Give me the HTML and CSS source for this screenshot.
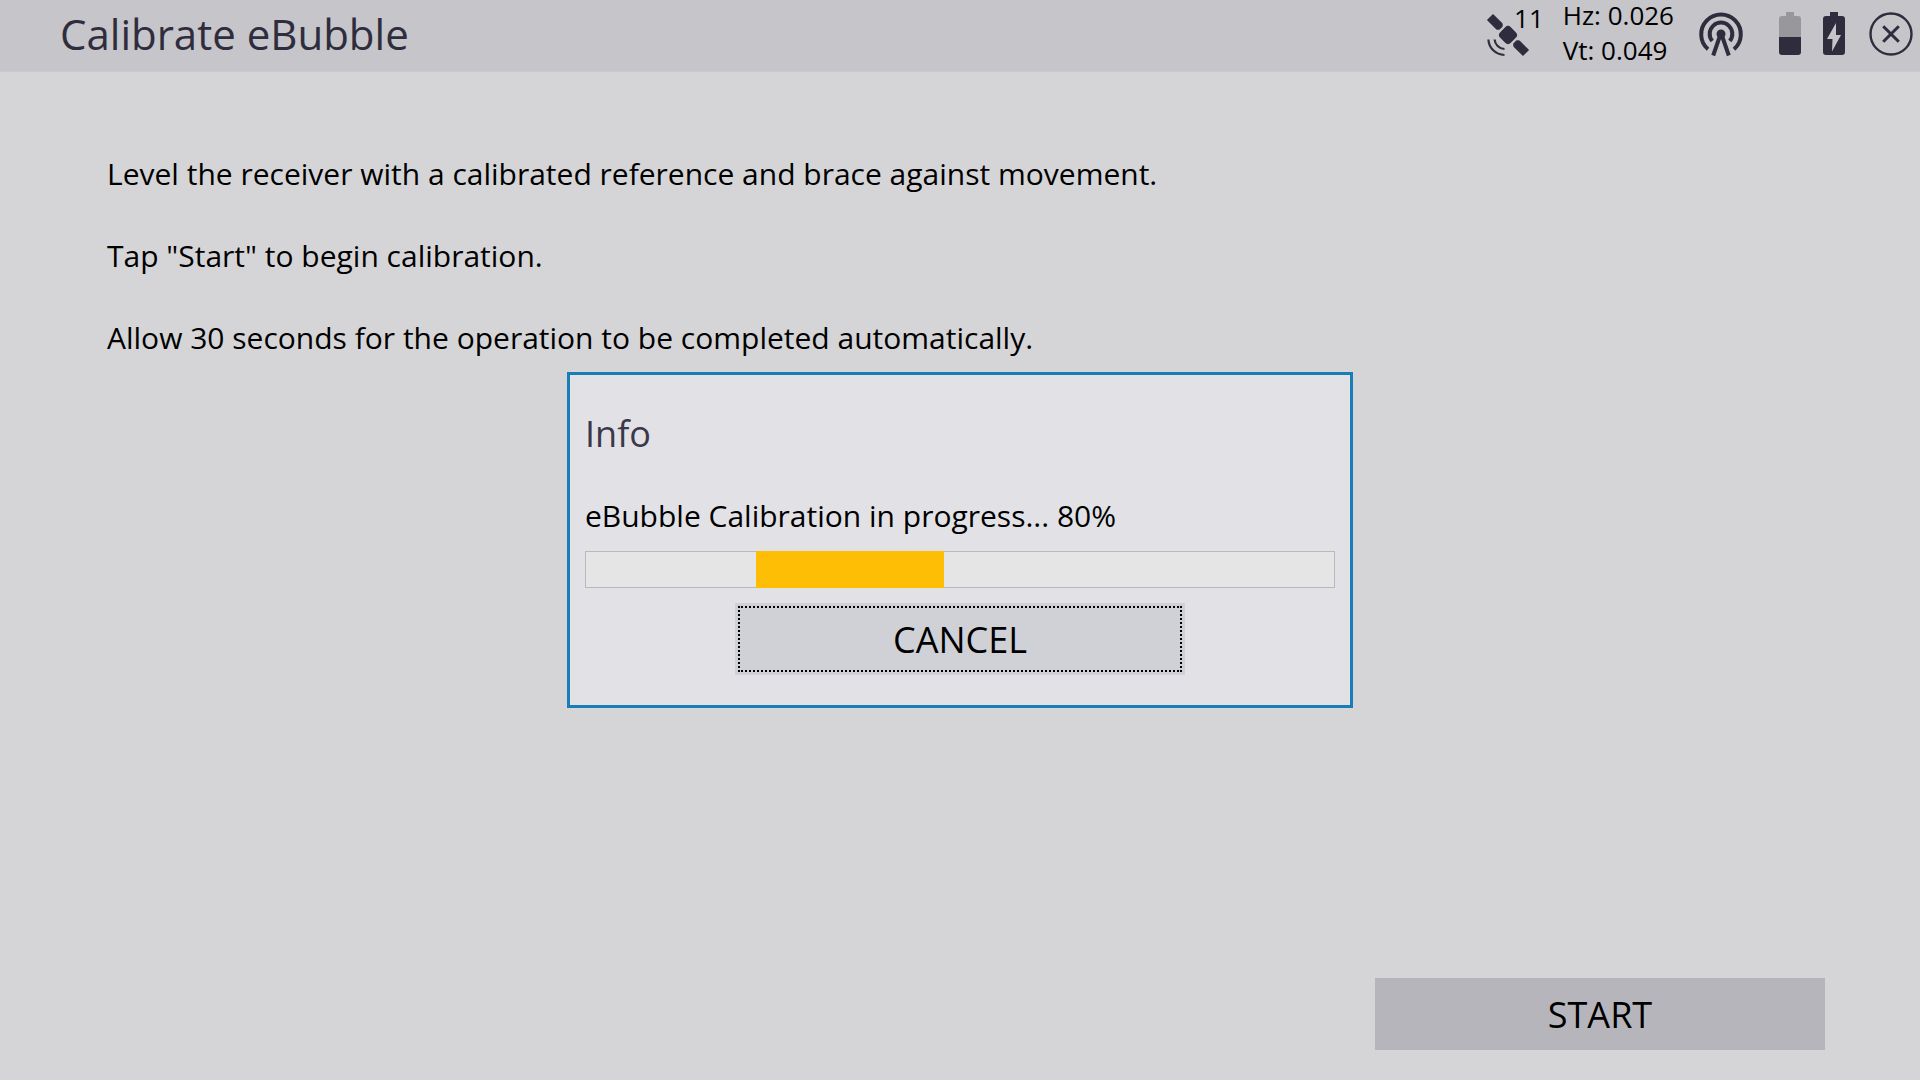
FILE: index.html
```html
<!DOCTYPE html>
<html lang="en">
<head>
  <meta charset="utf-8">
  <meta name="viewport" content="width=device-width, initial-scale=1">
  <title>Calibrate eBubble</title>
  <link rel="stylesheet" href="styles.css">
</head>
<body class="screen">
  <header class="topbar">
    <h1 class="topbar-title">Calibrate eBubble</h1>
    <div class="satellites">
      <svg class="icon" viewBox="0 0 44 44" aria-hidden="true">
        <g transform="translate(0 1) rotate(45 22 22)" fill="currentColor">
          <path d="M-3.500 17.700h13q1 0 2 1.200l.7 .8v4.600l-.7.8q-1 1.200-2 1.200h-13z"/>
          <rect x="14.500" y="14.500" width="15" height="15" rx="4"/>
          <path d="M47.500 17.700h-13q-1 0-2 1.200l-.7.8v4.600l.7.8q1 1.200 2 1.200h13z"/>
        </g>
        <g fill="none" stroke="currentColor" stroke-width="2.200">
          <path d="M2.400 27.500C2.800 36 9.500 42.500 18.500 43"/>
          <path d="M8.600 27.500C9 32.500 13 36.600 18.500 37"/>
        </g>
      </svg>
      <span class="satellites-count">11</span>
    </div>
    <div class="precision">
      <span>Hz: 0.026</span>
      <span>Vt: 0.049</span>
    </div>
    <svg class="icon icon-antenna" viewBox="0 0 44 44" aria-hidden="true">
      <g fill="none" stroke="currentColor" stroke-width="4">
        <path d="M9 37.300A19.800 19.800 0 1 1 35 37.300"/>
        <path d="M13.200 29A11.300 11.300 0 1 1 30.800 29"/>
        <path d="M21.600 22L14.200 43.500M22.400 22L29.800 43.500"/>
      </g>
      <circle cx="22" cy="22" r="4.500" fill="currentColor"/>
    </svg>
    <svg class="icon icon-battery" viewBox="0 0 22 44" aria-hidden="true">
      <path fill="#98989c" d="M7 0h8v4h4q3 0 3 3v18H0V7q0-3 3-3h4z"/>
      <path fill="currentColor" d="M0 25h22v15q0 3-3 3H3q-3 0-3-3z"/>
    </svg>
    <svg class="icon icon-battery" viewBox="0 0 22 44" aria-hidden="true">
      <path fill="currentColor" d="M7 0h8v4h4q3 0 3 3v33q0 3-3 3H3q-3 0-3-3V7q0-3 3-3h4z"/>
      <path fill="#c6c5ca" d="M13 11L4 27h5.500L9 39.500L18 23h-5z"/>
    </svg>
    <button class="close" type="button" aria-label="Close">
      <svg class="icon" viewBox="0 0 44 44" aria-hidden="true">
        <g fill="none" stroke="currentColor">
          <circle cx="22" cy="22" r="20.500" stroke-width="2.400"/>
          <path stroke-width="3" d="M14.200 14.200L29.800 29.800M29.800 14.200L14.200 29.800"/>
        </g>
      </svg>
    </button>
  </header>

  <main class="content">
    <p>Level the receiver with a calibrated reference and brace against movement.</p>
    <p>Tap "Start" to begin calibration.</p>
    <p>Allow 30 seconds for the operation to be completed automatically.</p>
  </main>

  <footer class="actions">
    <button class="button" type="button">START</button>
  </footer>

  <div class="overlay">
    <section class="dialog" role="dialog" aria-modal="true" aria-labelledby="dialog-title">
      <h2 class="dialog-title" id="dialog-title">Info</h2>
      <p class="dialog-text" id="dialog-text">eBubble Calibration in progress... 80%</p>
      <div class="progress" role="progressbar" aria-labelledby="dialog-text">
        <div class="progress-block" style="margin-left: 22.8%"></div>
      </div>
      <button class="button button-focused" type="button">CANCEL</button>
    </section>
  </div>
</body>
</html>
```
FILE: styles.css
```css
* {
  box-sizing: border-box;
}

.screen {
  display: flex;
  flex-direction: column;
  min-height: 100vh;
  margin: 0;
  background: #d5d5d7;
  color: #000;
  font: 30px/41px "Open Sans", "Noto Sans", sans-serif;
}

.screen h1,
.screen h2,
.screen p {
  margin: 0;
  font-weight: 400;
}

.topbar {
  display: flex;
  align-items: center;
  min-height: 72px;
  padding: 0 7px 3px 60px;
  border-bottom: 1px solid #cbcbce;
  background: #c6c5ca;
  color: #2f2d3d;
}

.topbar-title {
  flex: 1;
  font-size: 42px;
  line-height: 58px;
}

.icon {
  display: block;
  flex: none;
  width: 44px;
  height: 44px;
  overflow: visible;
}

.satellites {
  display: flex;
}

.satellites-count {
  margin: -11px 19px 0 -16px;
  color: #000;
  font-size: 26px;
  line-height: 35px;
}

.precision {
  display: flex;
  flex-direction: column;
  margin: -2px 25px 0 0;
  color: #000;
  font-size: 26px;
  line-height: 35px;
}

.icon-antenna {
  margin-right: 36px;
}

.icon-battery {
  width: 22px;
  margin-right: 22px;
}

.close {
  margin-left: 2px;
  padding: 0;
  border: 0;
  background: none;
  color: inherit;
}

.content {
  display: flex;
  flex: 1;
  flex-direction: column;
  gap: 41px;
  padding: 81px 107px 41px;
}

.actions {
  display: flex;
  justify-content: flex-end;
  padding: 0 95px 30px;
}

.button {
  width: 450px;
  max-width: 100%;
  height: 72px;
  padding: 0;
  border: 0;
  background: #b6b5bb;
  color: #000;
  font: inherit;
  font-size: 36px;
  line-height: 49px;
}

.button-focused {
  align-self: center;
  background: #d0d1d6;
  outline: 2px dotted #000;
  outline-offset: -5px;
}

.overlay {
  position: fixed;
  inset: 0;
  display: grid;
  place-items: center;
}

.dialog {
  display: flex;
  flex-direction: column;
  gap: 15px;
  width: 786px;
  max-width: 100%;
  padding: 34px 15px 30px;
  border: 3px solid #1b7db8;
  background: #e2e2e6;
}

.dialog .dialog-title {
  margin-bottom: 22px;
  color: #3a384a;
  font-size: 36px;
  line-height: 49px;
}

.progress {
  height: 37px;
  background: #e5e5e5;
  box-shadow: inset 0 0 0 1px #b9b9b9;
}

.progress-block {
  width: 25%;
  height: 100%;
  background: #ffbe06;
}
```
